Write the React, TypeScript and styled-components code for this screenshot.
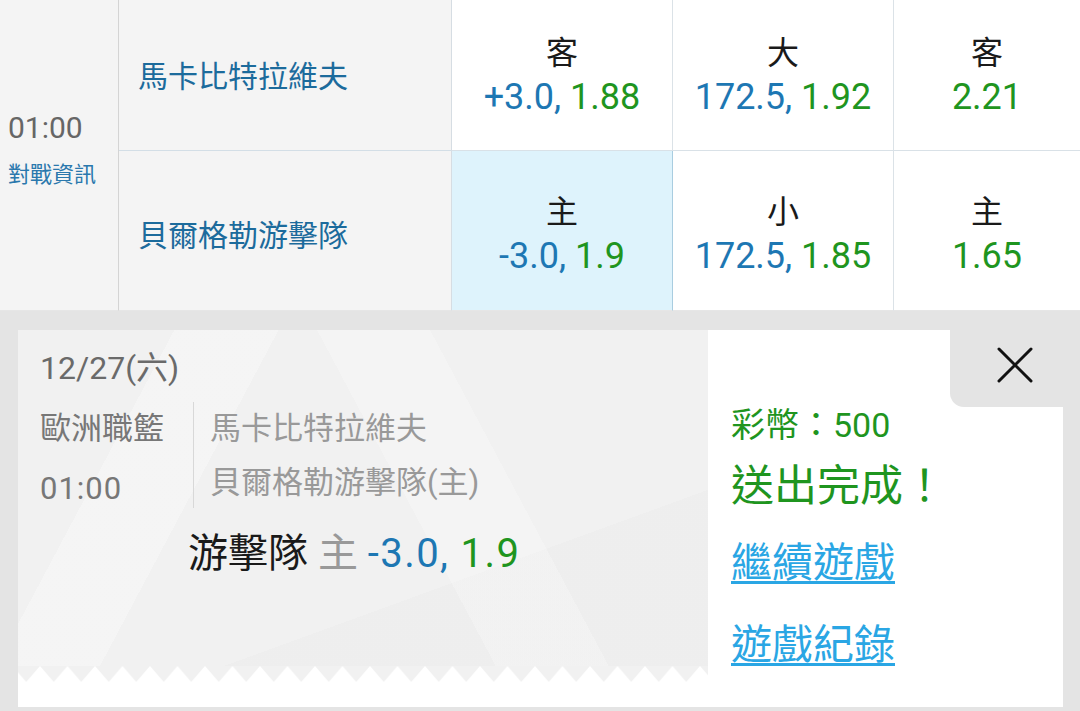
import styled, { createGlobalStyle } from "styled-components";

const GlobalStyle = createGlobalStyle`
  html, body {
    margin: 0;
    padding: 0;
    background: #e4e4e4;
  }
  body {
    font-family: Roboto, "Noto Sans CJK TC", sans-serif;
  }
`;

type Odd = {
  label: string;
  line?: string;
  price: string;
  selected?: boolean;
};

const rows: { team: string; odds: Odd[] }[] = [
  {
    team: "馬卡比特拉維夫",
    odds: [
      { label: "客", line: "+3.0", price: "1.88" },
      { label: "大", line: "172.5", price: "1.92" },
      { label: "客", price: "2.21" },
    ],
  },
  {
    team: "貝爾格勒游擊隊",
    odds: [
      { label: "主", line: "-3.0", price: "1.9", selected: true },
      { label: "小", line: "172.5", price: "1.85" },
      { label: "主", price: "1.65" },
    ],
  },
];

export default function App() {
  return (
    <Page>
      <GlobalStyle />
      <Table>
        <TimeCell>
          <Time>01:00</Time>
          <InfoLink>對戰資訊</InfoLink>
        </TimeCell>
        {rows.map((row, r) => (
          <>
            <TeamCell key={"t" + r} $second={r === 1}>
              {row.team}
            </TeamCell>
            {row.odds.map((o, i) => (
              <OddsCell
                key={r + "-" + i}
                $second={r === 1}
                $selected={!!o.selected}
                $last={i === 2}
              >
                <OddsLabel>{o.label}</OddsLabel>
                <OddsValue>
                  {o.line && <Blue>{o.line}, </Blue>}
                  <Green>{o.price}</Green>
                </OddsValue>
              </OddsCell>
            ))}
          </>
        ))}
      </Table>

      <Card>
        <Ticket>
          <TicketBody>
            <DateLine>12/27(六)</DateLine>
            <InfoRow>
              <LeagueCol>
                <LeagueLine>歐洲職籃</LeagueLine>
                <LeagueLine $gap>01:00</LeagueLine>
              </LeagueCol>
              <TeamsCol>
                <TeamLine>馬卡比特拉維夫</TeamLine>
                <TeamLine>貝爾格勒游擊隊(主)</TeamLine>
              </TeamsCol>
            </InfoRow>
            <BetLine>
              <BetTeam>游擊隊</BetTeam> <BetSide>主</BetSide>{" "}
              <BetOdds>
                <Blue>-3.0, </Blue>
                <Green>1.9</Green>
              </BetOdds>
            </BetLine>
          </TicketBody>
          <Zigzag width="100%" height="16">
            <defs>
              <pattern
                id="zig"
                x="8.25"
                y="0"
                width="27.5"
                height="16"
                patternUnits="userSpaceOnUse"
              >
                <path d="M0 0 H27.5 V16 L13.75 0 L0 16 Z" fill="#f1f1f1" />
              </pattern>
            </defs>
            <rect width="100%" height="16" fill="url(#zig)" />
          </Zigzag>
          <TicketFoot />
        </Ticket>

        <Result>
          <CloseButton aria-label="close">
            <svg width="36" height="36" viewBox="0 0 36 36">
              <path
                d="M2 2 L34 34 M34 2 L2 34"
                stroke="#111"
                strokeWidth="3"
                strokeLinecap="round"
              />
            </svg>
          </CloseButton>
          <Coins>彩幣：500</Coins>
          <Done>送出完成！</Done>
          <ResultLink href="#" $top={23}>
            繼續遊戲
          </ResultLink>
          <ResultLink href="#" $top={28}>
            遊戲紀錄
          </ResultLink>
        </Result>
      </Card>
    </Page>
  );
}

const Page = styled.div`
  width: 1080px;
  height: 711px;
  overflow: hidden;
  background: #e4e4e4;
`;

const Table = styled.div`
  display: grid;
  grid-template-columns: 119px 333px 221px 221px 186px;
  grid-template-rows: 151px 160px;
  background: #f4f4f4;
`;

const TimeCell = styled.div`
  grid-row: 1 / span 2;
  grid-column: 1;
  display: flex;
  flex-direction: column;
  padding: 110px 0 0 8px;
  border-right: 1px solid #d4d4d4;
  border-bottom: 1px solid #e6e6e6;
  background: #f4f4f4;
`;

const Time = styled.div`
  font-size: 30px;
  line-height: 36px;
  color: #666;
`;

const InfoLink = styled.div`
  font-size: 22px;
  line-height: 30px;
  color: #2a78ad;
  margin-top: 14px;
`;

const TeamCell = styled.div<{ $second: boolean }>`
  display: flex;
  align-items: center;
  padding: ${(p) => (p.$second ? "4px 0 0 19px" : "0 0 3px 19px")};
  font-size: 30px;
  color: #1c6b9c;
  background: #f4f4f4;
  border-bottom: 1px solid ${(p) => (p.$second ? "#e6e6e6" : "#d3dee6")};
  border-right: 1px solid #d6dde3;
`;

const OddsCell = styled.div<{
  $second: boolean;
  $selected: boolean;
  $last: boolean;
}>`
  display: flex;
  flex-direction: column;
  align-items: center;
  justify-content: center;
  padding-top: ${(p) => (p.$second ? "7px" : "0")};
  background: ${(p) => (p.$selected ? "#def3fc" : "#fff")};
  border-bottom: 1px solid ${(p) => (p.$second ? "#e6e6e6" : "#d9e1e7")};
  border-right: ${(p) =>
    p.$last ? "none" : `1px solid ${p.$selected ? "#a9cde0" : "#dbe2e7"}`};
`;

const OddsLabel = styled.div`
  font-size: 32px;
  line-height: 44px;
  color: #1a1a1a;
`;

const OddsValue = styled.div`
  font-size: 36px;
  line-height: 44px;
  white-space: nowrap;
`;

const Blue = styled.span`
  color: #1d77b3;
`;

const Green = styled.span`
  color: #1f951f;
`;

const Card = styled.div`
  display: flex;
  margin: 19px 17px 0 18px;
  height: 377px;
`;

const Ticket = styled.div`
  width: 690px;
  display: flex;
  flex-direction: column;
  background: #fff;
`;

const TicketBody = styled.div`
  height: 336px;
  padding: 18px 0 0 22px;
  box-sizing: border-box;
  background:
    linear-gradient(118deg, transparent 0 18%, rgba(255, 255, 255, 0.28) 18% 30%, transparent 30%),
    linear-gradient(62deg, transparent 0 55%, rgba(255, 255, 255, 0.22) 55% 68%, transparent 68%),
    linear-gradient(160deg, transparent 0 70%, rgba(0, 0, 0, 0.01) 70% 100%),
    #f1f1f1;
`;

const Zigzag = styled.svg`
  display: block;
  flex: none;
`;

const TicketFoot = styled.div`
  flex: 1;
  background: #fff;
`;

const DateLine = styled.div`
  font-size: 32px;
  line-height: 40px;
  color: #6a6a6a;
`;

const InfoRow = styled.div`
  display: flex;
  margin-top: 14px;
`;

const LeagueCol = styled.div`
  width: 153px;
`;

const LeagueLine = styled.div<{ $gap?: boolean }>`
  font-size: 31px;
  line-height: 54px;
  color: #777;
  margin-top: ${(p) => (p.$gap ? "6px" : "0")};
  letter-spacing: ${(p) => (p.$gap ? "1px" : "0")};
`;

const TeamsCol = styled.div`
  border-left: 1px solid #d8d8d8;
  padding-left: 16px;
  height: 106px;
`;

const TeamLine = styled.div`
  font-size: 31px;
  line-height: 54px;
  color: #999;
  white-space: nowrap;
`;

const BetLine = styled.div`
  margin: 12px 0 0 148px;
  font-size: 40px;
  line-height: 52px;
  white-space: nowrap;
`;

const BetTeam = styled.span`
  color: #1a1a1a;
`;

const BetSide = styled.span`
  color: #999;
`;

const BetOdds = styled.span`
  letter-spacing: 1.4px;
`;

const Result = styled.div`
  position: relative;
  flex: 1;
  background: #fff;
  padding: 73px 0 0 23px;
  display: flex;
  flex-direction: column;
  align-items: flex-start;
`;

const CloseButton = styled.button`
  position: absolute;
  top: 0;
  right: -17px;
  width: 130px;
  height: 77px;
  border: none;
  margin: 0;
  padding: 17px 0 0 47px;
  box-sizing: border-box;
  background: #e4e4e4;
  border-bottom-left-radius: 14px;
  display: flex;
  align-items: flex-start;
  cursor: pointer;
`;

const Coins = styled.div`
  font-size: 34px;
  line-height: 44px;
  color: #1f951f;
`;

const Done = styled.div`
  margin-top: 12px;
  font-size: 43px;
  line-height: 54px;
  color: #1f951f;
`;

const ResultLink = styled.a<{ $top: number }>`
  margin-top: ${(p) => p.$top}px;
  font-size: 41px;
  line-height: 54px;
  color: #2aa6e4;
  text-decoration: underline;
  text-decoration-thickness: 3px;
  text-underline-offset: 4px;
`;
